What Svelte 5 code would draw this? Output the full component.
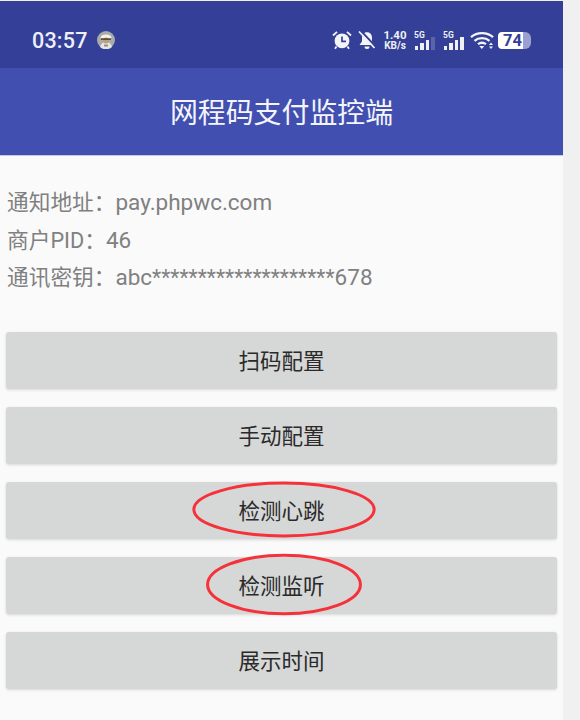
<script>
  const info = [
    { key: '通知地址：', value: 'pay.phpwc.com' },
    { key: '商户PID：', value: '46' },
    { key: '通讯密钥：', value: 'abc', stars: '********************', tail: '678' }
  ];
  const buttons = [
    { label: '扫码配置' },
    { label: '手动配置' },
    { label: '检测心跳', mark: 'heart' },
    { label: '检测监听', mark: 'listen' },
    { label: '展示时间' }
  ];
</script>

<div class="page">
  <div class="phone">
    <header class="status">
      <div class="left">
        <span class="time">03:57</span>
        <svg class="avatar" viewBox="0 0 18 18" aria-hidden="true">
          <circle cx="9" cy="9" r="9" fill="#a9aca8" />
          <path d="M3 16c1-3.500 3-5 6-5s5 1.500 6 5a9 9 0 0 1-12 0z" fill="#e6e6e2" />
          <path d="M3.500 6.500C4 2.500 14 2.500 14.500 6.500l-1 1h-9z" fill="#f2f2ee" />
          <circle cx="9" cy="9.500" r="3" fill="#c99a6e" />
          <path d="M4 7.400h10v1.400H4z" fill="#3b3a38" />
          <path d="M7 13.500h4v2H7z" fill="#8f908c" />
        </svg>
      </div>
      <div class="right">
        <svg class="ico alarm" viewBox="0 0 20 20" aria-hidden="true">
          <circle cx="10" cy="10.800" r="7.400" fill="#f3f4f8" />
          <path d="M10 6.500v4.800h4" fill="none" stroke="#343f97" stroke-width="1.700" />
          <path d="M1 5.500 5 1.800M19 5.500 15 1.800M4.500 16.500 3 18.800M15.500 16.500l1.500 2.300" stroke="#f3f4f8" stroke-width="1.800" fill="none" />
        </svg>
        <svg class="ico bell" viewBox="0 0 20 20" aria-hidden="true">
          <path d="M10 2.200c3.400 0 5 2.600 5 5.600v3.600l2.500 3.600h-15l2.500-3.600V7.800c0-3 1.600-5.600 5-5.600z" fill="#f3f4f8" />
          <path d="M7.500 16.400h5a2.500 2.500 0 0 1-5 0z" fill="#f3f4f8" />
          <path d="M3.500 0.500 19.500 17.500" stroke="#343f97" stroke-width="2" />
          <path d="M2 1.500 17.500 18" stroke="#f3f4f8" stroke-width="1.800" />
        </svg>
        <div class="speed"><span class="rate">1.40</span><span class="unit">KB/s</span></div>
        <div class="signal first">
          <span class="net">5G</span>
          <div class="bars"><i class="b1"></i><i class="b2"></i><i class="b3"></i><i class="b4 dim"></i></div>
        </div>
        <div class="signal">
          <span class="net">5G</span>
          <div class="bars"><i class="b1"></i><i class="b2"></i><i class="b3"></i><i class="b4"></i></div>
        </div>
        <svg class="ico wifi" viewBox="0 0 24 18" aria-hidden="true">
          <path d="M1 6.200C7 .8 17 .8 23 6.200M4.500 9.800C8.500 6.300 15.500 6.300 19.500 9.800M8 13.200c2.300-1.700 5.700-1.700 8 0" fill="none" stroke="#f3f4f8" stroke-width="2.300" />
          <path d="M9.300 15h5l-2.500 3z" fill="#f3f4f8" />
          <path d="M21 11.500 23 14h-4zM21 18l2-2.500h-4z" fill="#f3f4f8" />
        </svg>
        <div class="battery">
          <span class="level">74</span>
        </div>
      </div>
    </header>

    <div class="appbar">网程码支付监控端</div>

    <main class="content">
      <section class="info">
        {#each info as row}
          <p><span class="key">{row.key}</span>{row.value}{#if row.stars}<span class="stars">{row.stars}</span>{row.tail}{/if}</p>
        {/each}
      </section>

      <section class="actions">
        {#each buttons as b}
          <button type="button" class="btn">
            {b.label}
            {#if b.mark}
              <svg class="mark {b.mark}" viewBox="0 0 100 100" preserveAspectRatio="none" aria-hidden="true">
                <ellipse cx="50" cy="50" rx="49" ry="48" vector-effect="non-scaling-stroke" />
              </svg>
            {/if}
          </button>
        {/each}
      </section>
    </main>
  </div>
</div>

<style>
  :global(body) {
    margin: 0;
    background: #f0f0f0;
  }
  .page {
    width: 580px;
    height: 720px;
    overflow: hidden;
    background: #f0f0f0;
    font-family: Roboto, "Noto Sans CJK SC", sans-serif;
  }
  .phone {
    width: 563px;
    height: 719px;
    margin-top: 1px;
    background: #fafafa;
    display: flex;
    flex-direction: column;
  }
  .status {
    height: 67px;
    flex: none;
    background: #343f97;
    display: flex;
    align-items: center;
    justify-content: space-between;
    padding: 11px 32px 0 32px;
    box-sizing: border-box;
    color: #eef0f6;
  }
  .left {
    display: flex;
    align-items: center;
    gap: 9px;
  }
  .time {
    font-size: 21.5px;
    font-weight: 500;
    letter-spacing: 0.2px;
  }
  .avatar {
    width: 18px;
    height: 18px;
  }
  .right {
    display: flex;
    align-items: center;
  }
  .ico {
    display: block;
    flex: none;
  }
  .alarm {
    width: 20px;
    height: 20px;
  }
  .bell {
    width: 20px;
    height: 20px;
    margin-left: 5px;
  }
  .speed {
    display: flex;
    flex-direction: column;
    align-items: center;
    width: 24px;
    margin-left: 6px;
    font-weight: 700;
  }
  .rate {
    font-size: 11.5px;
    line-height: 11px;
  }
  .unit {
    font-size: 10px;
    line-height: 10px;
  }
  .signal {
    position: relative;
    width: 23px;
    height: 19px;
    margin-left: 6px;
  }
  .signal.first {
    margin-left: 7px;
  }
  .net {
    position: absolute;
    left: 0;
    top: 0;
    font-size: 8.5px;
    font-weight: 700;
    line-height: 8px;
  }
  .bars {
    position: absolute;
    left: 1px;
    bottom: 0;
    display: flex;
    align-items: flex-end;
    gap: 2px;
  }
  .bars i {
    display: block;
    width: 3.4px;
    background: #eef0f6;
  }
  .b1 { height: 4px; }
  .b2 { height: 7px; }
  .b3 { height: 10px; }
  .b4 { height: 13px; }
  .bars .dim { background: #5a64ab; }
  .wifi {
    width: 24px;
    height: 18px;
    margin-left: 4px;
  }
  .battery {
    width: 33px;
    height: 17px;
    margin-left: 4px;
    border-radius: 4px 6px 6px 4px;
    background: #9aa0cf;
    overflow: hidden;
  }
  .level {
    display: block;
    width: 25px;
    height: 17px;
    padding-right: 1px;
    box-sizing: border-box;
    background: #fff;
    color: #343f97;
    border-radius: 4px 0 0 4px;
    font-size: 16.5px;
    font-weight: 700;
    line-height: 18px;
    text-align: right;
  }
  .appbar {
    height: 88px;
    flex: none;
    background: #4150b0;
    color: #f4f5fb;
    font-size: 27.9px;
    display: flex;
    align-items: center;
    justify-content: center;
    box-sizing: border-box;
    padding-bottom: 1px;
    border-bottom: 1px solid #c3c8e6;
  }
  .content {
    padding: 28px 6px 0;
  }
  .info {
    padding-left: 1px;
  }
  .info p {
    margin: 0;
    height: 37.5px;
    line-height: 37.5px;
    font-size: 22.5px;
    color: #808080;
    white-space: nowrap;
  }
  .key {
    font-size: 21.7px;
  }
  .stars {
    font-size: 21.2px;
  }
  .actions {
    display: flex;
    flex-direction: column;
    gap: 18px;
    margin-top: 35px;
  }
  .btn {
    position: relative;
    display: block;
    width: 100%;
    height: 57px;
    border: 0;
    padding: 0 0 2px;
    border-radius: 3px;
    background: #d6d7d7;
    box-shadow: 0 1px 3px rgba(0, 0, 0, 0.14);
    color: #2a2a2a;
    font-family: inherit;
    font-size: 21.5px;
  }
  .mark {
    position: absolute;
    overflow: visible;
    fill: none;
    stroke: #f5323a;
    stroke-width: 3px;
    pointer-events: none;
  }
  .heart {
    left: 186px;
    top: 0;
    width: 184px;
    height: 55px;
  }
  .listen {
    left: 200px;
    top: -3px;
    width: 156px;
    height: 61px;
  }
</style>
